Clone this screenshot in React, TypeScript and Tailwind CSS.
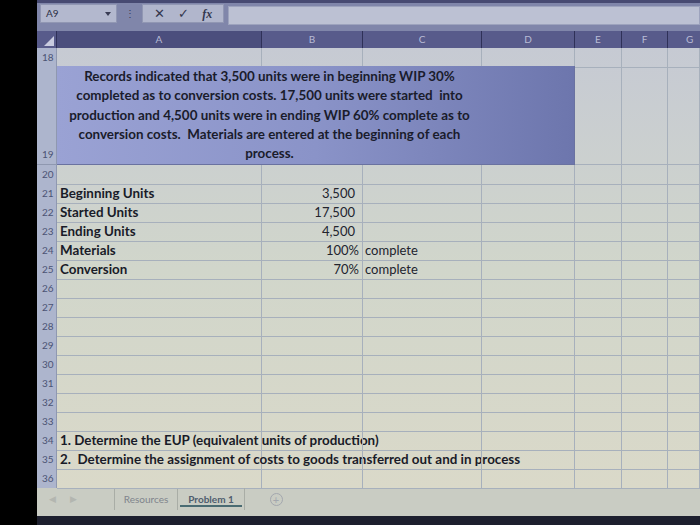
import React from "react";

const COLS = "grid grid-cols-[20px_205px_101px_119px_93px_47px_46px_1fr]";
const CELL = "border-r border-b border-[#a7b0bc] min-w-0 overflow-visible whitespace-nowrap";
const RH = "bg-[#adb5cd] border-r border-b border-[#8f98b0] text-[10px] text-[#4b5374] pl-[5px] leading-[19px]";

type Cells = (React.ReactNode | null)[];

function Row({ n, cells }: { n: number; cells?: Cells }) {
  const c: Cells = cells ?? [];
  return (
    <div className={`${COLS} h-[19px]`}>
      <div className={RH}>{n}</div>
      {Array.from({ length: 7 }).map((_, i) => (
        <div key={i} className={`${CELL} relative`}>
          {c[i] ?? null}
        </div>
      ))}
    </div>
  );
}

const Label = ({ t }: { t: string }) => (
  <div className="px-[3px] text-[13.4px] font-bold leading-[19px] text-[#191b28] whitespace-pre">{t}</div>
);
const Num = ({ t }: { t: string }) => (
  <div className="pr-[7px] text-right text-[13px] leading-[19px] text-[#22242e]">{t}</div>
);
const Pct = ({ t }: { t: string }) => (
  <div className="pr-[3px] text-right text-[13px] leading-[19px] text-[#22242e]">{t}</div>
);
const Txt = ({ t }: { t: string }) => (
  <div className="pl-[2px] text-[13px] leading-[19px] text-[#22242e]">{t}</div>
);

export default function App() {
  return (
    <div className="w-[700px] h-[525px] bg-black flex overflow-hidden font-['Lato',sans-serif]">
      <div className="w-[37px] shrink-0 bg-black" />
      <div className="flex-1 flex flex-col">
        {/* formula bar */}
        <div className="h-[31px] bg-[#8086aa] border-t-[3px] border-[#474a72] flex items-start pt-[1px]">
          <div className="ml-[3px] w-[77px] h-[19px] bg-[#b3b8ce] border border-[#9197b3] flex items-center justify-between px-[5px]">
            <span className="text-[10px] text-[#2c2f44]">A9</span>
            <span className="w-0 h-0 border-l-[3px] border-r-[3px] border-t-[4px] border-l-transparent border-r-transparent border-t-[#3a3d55]" />
          </div>
          <div className="w-[25px] flex justify-center pt-[2px] text-[10px] text-[#3a3d58] leading-[14px]">⋮</div>
          <div className="w-[82px] h-[19px] bg-[#b1b6cc] border border-[#9197b3] flex items-center justify-around px-[4px] text-[#33364e]">
            <span className="text-[13px] leading-none">✕</span>
            <span className="text-[13px] leading-none">✓</span>
            <span className="text-[12px] italic font-['Liberation_Serif',serif] font-bold leading-none">fx</span>
          </div>
          <div className="ml-[4px] mt-[2px] flex-1 h-[19px] bg-[#bcc1d3] border border-[#9da3bd]" />
        </div>
        {/* column headers */}
        <div className={`${COLS} h-[17px] bg-[#585b8b] text-[10px] text-[#b8bcd6] leading-[17px]`}>
          <div className="relative border-r border-[#2f3158]">
            <div className="absolute right-[2px] bottom-[2px] w-0 h-0 border-b-[10px] border-l-[10px] border-b-[#c9cce0] border-l-transparent" />
          </div>
          <div className="text-center bg-[#4b4e7d] border-r border-[#2f3158]">A</div>
          <div className="text-center border-r border-[#2f3158]">B</div>
          <div className="text-center border-r border-[#2f3158]">C</div>
          <div className="text-center border-r border-[#2f3158]">D</div>
          <div className="text-center border-r border-[#2f3158]">E</div>
          <div className="text-center border-r border-[#2f3158]">F</div>
          <div className="pl-[18px]">G</div>
        </div>
        {/* grid body */}
        <div className="bg-linear-to-b from-[#c6cad3] via-[#d1d6cb] to-[#dad9c9]">
          {/* row 18 */}
          <div className={`${COLS} h-[18px]`}>
            <div className={RH}>18</div>
            {Array.from({ length: 7 }).map((_, i) => (
              <div key={i} className={CELL} />
            ))}
          </div>
          {/* row 19 */}
          <div className={`${COLS} h-[99px]`}>
            <div className={`${RH} flex items-end`}>19</div>
            <div className="col-span-4 bg-linear-to-r from-[#9aa2d4] via-[#8a93c8] to-[#6d76ad] border-r border-b border-[#6a72a0]">
              <div className="w-[425px] pt-[1px] text-center text-[13.4px] font-bold leading-[19.3px] text-[#1a1c2c] whitespace-pre">
                {"Records indicated that 3,500 units were in beginning WIP 30%\ncompleted as to conversion costs. 17,500 units were started  into\nproduction and 4,500 units were in ending WIP 60% complete as to\nconversion costs.  Materials are entered at the beginning of each\nprocess."}
              </div>
            </div>
            <div className={CELL} />
            <div className={CELL} />
            <div className={CELL} />
          </div>
          <Row n={20} />
          <Row n={21} cells={[<Label t="Beginning Units" />, <Num t="3,500" />]} />
          <Row n={22} cells={[<Label t="Started Units" />, <Num t="17,500" />]} />
          <Row n={23} cells={[<Label t="Ending Units" />, <Num t="4,500" />]} />
          <Row n={24} cells={[<Label t="Materials" />, <Pct t="100%" />, <Txt t="complete" />]} />
          <Row n={25} cells={[<Label t="Conversion" />, <Pct t="70%" />, <Txt t="complete" />]} />
          <Row n={26} />
          <Row n={27} />
          <Row n={28} />
          <Row n={29} />
          <Row n={30} />
          <Row n={31} />
          <Row n={32} />
          <Row n={33} />
          <Row n={34} cells={[<Label t="1. Determine the EUP (equivalent units of production)" />]} />
          <Row n={35} cells={[<Label t="2.  Determine the assignment of costs to goods transferred out and in process" />]} />
          <Row n={36} />
        </div>
        {/* sheet tabs */}
        <div className="h-[28px] bg-[#c9ccc3] flex items-start">
          <div className="w-[78px] h-[22px] border-r border-[#a9ada6] flex items-center gap-[14px] pl-[12px] text-[#b3b6b0] text-[9px]">
            <span>◀</span>
            <span>▶</span>
          </div>
          <div className="w-[63px] h-[22px] border-r border-[#a9ada6] flex items-center justify-center text-[10px] text-[#80848c]">
            Resources
          </div>
          <div className="w-[67px] h-[22px] border-r border-[#a9ada6] flex items-center justify-center relative">
            <span className="text-[10px] font-bold text-[#4f5d6e]">Problem 1</span>
            <div className="absolute left-[2px] right-[2px] bottom-[3px] h-[2px] bg-[#4a6b72]" />
          </div>
          <div className="w-[62px] h-[22px] flex items-center justify-center">
            <div className="w-[13px] h-[13px] rounded-full border border-[#a3a7ae] text-[#a3a7ae] text-[11px] leading-[11px] text-center">+</div>
          </div>
          <div className="flex-1" />
        </div>
        <div className="flex-1 bg-[#1d1f2e]" />
      </div>
    </div>
  );
}
